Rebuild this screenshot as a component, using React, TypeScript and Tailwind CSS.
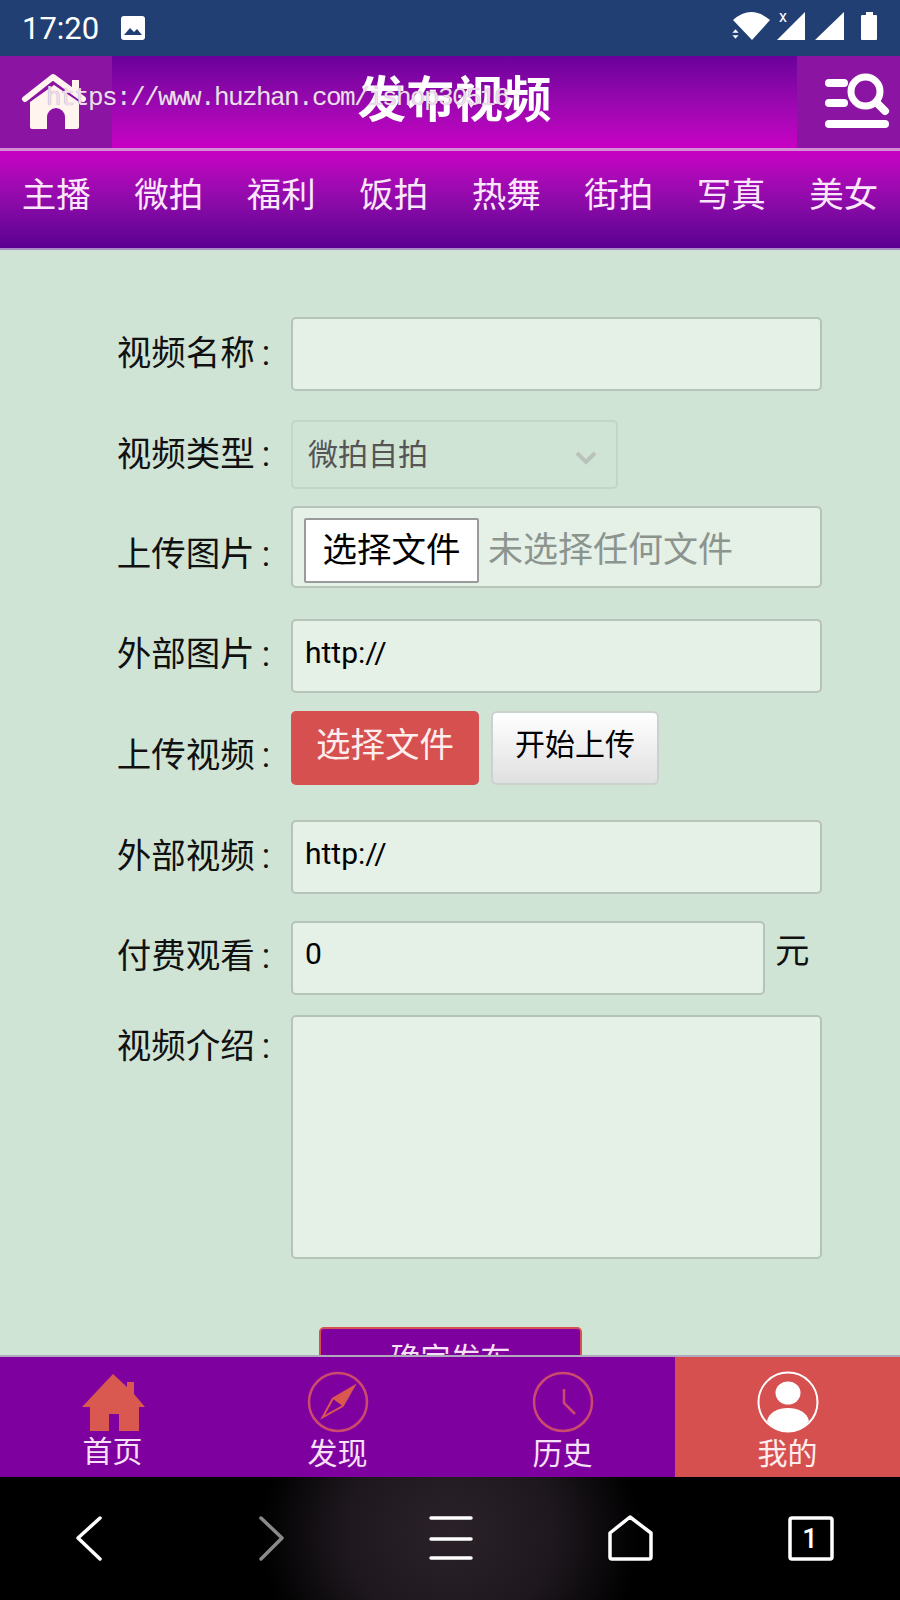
import React from 'react';

const inputBox = 'rounded-[5px] border-2 border-[#b5c3b9] bg-[#e5f0e7]';
const tabs = ['主播', '微拍', '福利', '饭拍', '热舞', '街拍', '写真', '美女'];

const Label: React.FC<{ text: string; className: string }> = ({ text, className }) => (
  <div className={`w-[291px] shrink-0 pr-[21px] text-right text-[34.5px] leading-[44px] text-[#111] whitespace-nowrap ${className}`}>
    {text}
    <span className="ml-[7px]">:</span>
  </div>
);

const StatusBar: React.FC = () => (
  <div className="h-[56px] shrink-0 bg-[#213f72] flex items-center text-white">
    <span className="ml-[22px] text-[31px] leading-none font-normal">17:20</span>
    <svg className="ml-[21px]" width="26" height="26" viewBox="0 0 26 26">
      <rect x="1" y="1" width="24" height="24" rx="3" fill="#fff" />
      <path d="M4 20l6-7 4 4 3-3 5 6z" fill="#213f72" />
    </svg>
    <svg className="ml-auto" width="168" height="56" viewBox="0 0 168 56" fill="#fff">
      <path d="M1 20Q19 4 38 20L20 40z" />
      <path d="M3.5 29l-3.5 4h7zM3.5 39l-3.5-4h7z" stroke="#213f72" strokeWidth="0.5" />
      <text x="47" y="22" fontSize="16" fill="#fff">x</text>
      <path d="M45 40L73 12v28z" />
      <path d="M83 40L112 12v28z" />
      <rect x="129" y="15" width="16" height="25" rx="1" />
      <rect x="134" y="12" width="7" height="4" />
    </svg>
  </div>
);

const Header: React.FC = () => (
  <div className="relative h-[92px] shrink-0 flex bg-gradient-to-b from-[#6b009a] to-[#c800c4]">
    <div className="w-[112px] bg-[#8b14a3] flex items-center justify-center">
      <svg width="112" height="92" viewBox="0 0 112 92" fill="#fff5ee">
        <path d="M25 43L53 21l30 22" fill="none" stroke="#fff5ee" strokeWidth="6" strokeLinecap="round" strokeLinejoin="round" />
        <path d="M30 46L54 29l25 17v25a2 2 0 0 1-2 2H65V61a9 9 0 0 0-18 0v12H32a2 2 0 0 1-2-2z" />
        <rect x="72" y="24" width="7" height="14" />
      </svg>
    </div>
    <div className="flex-1 text-center text-[48.5px] leading-[90px] font-bold text-white">发布视频</div>
    <div className="w-[103px] bg-[#8b14a3]">
      <svg width="103" height="92" viewBox="0 0 103 92" fill="none" stroke="#fff" strokeLinecap="round">
        <path d="M32 27h15M32 47h15" strokeWidth="8" />
        <circle cx="68.5" cy="35.5" r="14.5" strokeWidth="7" />
        <path d="M80 47l8 8" strokeWidth="8" />
        <path d="M32 68h56" strokeWidth="8" />
      </svg>
    </div>
    <div className="absolute left-[46px] top-[27px] text-[26px] leading-[30px] tracking-[-1.6px] text-[#f0dcf0] [text-shadow:0_0_1px_rgba(90,90,90,0.6)] font-['Liberation_Mono',monospace] whitespace-nowrap">
      https://www.huzhan.com/ishop30516
    </div>
  </div>
);

const Categories: React.FC = () => (
  <div className="h-[102px] shrink-0 border-t-[3px] border-[#d58ed6] border-b-2 border-b-[#a98bc4] bg-gradient-to-b from-[#c800c4] to-[#5a0090] grid grid-cols-8">
    {tabs.map(t => (
      <div key={t} className="text-center text-[34.5px] leading-[88px] text-[#fbe6fb]">{t}</div>
    ))}
  </div>
);

const Form: React.FC = () => (
  <div className="flex-1 overflow-hidden bg-[#d0e4d5] pt-[67px] pr-[78px]">
    <div className="flex">
      <Label text="视频名称" className="mt-[14px]" />
      <div className={`flex-1 h-[74px] ${inputBox}`} />
    </div>
    <div className="flex mt-[29px]">
      <Label text="视频类型" className="mt-[12px]" />
      <div className="w-[327px] h-[69px] rounded-[5px] border-2 border-[#c4d4c8] flex items-center pl-[15px] text-[30px] text-[#555]">
        微拍自拍
        <svg className="ml-auto mr-[19px] mt-[6px]" width="22" height="14" viewBox="0 0 22 14" fill="none" stroke="#b9c2bc" strokeWidth="4">
          <path d="M2 2l9 9 9-9" />
        </svg>
      </div>
    </div>
    <div className="flex mt-[17px]">
      <Label text="上传图片" className="mt-[26px]" />
      <div className={`flex-1 h-[82px] flex items-start pt-[10px] pl-[11px] ${inputBox}`}>
        <div className="w-[175px] h-[65px] bg-white border-2 border-[#9a9a9a] rounded-[2px] text-center text-[34.5px] leading-[60px] text-black">选择文件</div>
        <span className="ml-[9px] text-[35px] leading-[66px] text-[#8c948e] whitespace-nowrap">未选择任何文件</span>
      </div>
    </div>
    <div className="flex mt-[31px]">
      <Label text="外部图片" className="mt-[13px]" />
      <div className={`flex-1 h-[74px] pl-[12px] text-[30px] leading-[64px] text-black ${inputBox}`}>http://</div>
    </div>
    <div className="flex mt-[18px]">
      <Label text="上传视频" className="mt-[22px]" />
      <div className="w-[188px] h-[74px] rounded-[5px] bg-[#d65050] text-center text-[34.5px] leading-[68px] text-[#fdeeee]">选择文件</div>
      <div className="ml-[12px] w-[168px] h-[74px] rounded-[6px] border-2 border-[#c9d2cc] bg-gradient-to-b from-white to-[#e0e0e0] text-center text-[30px] leading-[64px] text-black">开始上传</div>
    </div>
    <div className="flex mt-[35px]">
      <Label text="外部视频" className="mt-[14px]" />
      <div className={`flex-1 h-[74px] pl-[12px] text-[30px] leading-[64px] text-black ${inputBox}`}>http://</div>
    </div>
    <div className="flex mt-[27px]">
      <Label text="付费观看" className="mt-[13px]" />
      <div className={`w-[474px] h-[74px] pl-[12px] text-[30px] leading-[62px] text-black ${inputBox}`}>0</div>
      <span className="ml-[10px] mt-[8px] text-[34.5px] leading-[44px] text-[#111]">元</span>
    </div>
    <div className="flex mt-[20px]">
      <Label text="视频介绍" className="mt-[9px]" />
      <div className={`flex-1 h-[244px] ${inputBox}`} />
    </div>
    <div className="mt-[68px] ml-[319px] w-[263px] h-[70px] rounded-[5px] border-2 border-[#d65050] bg-[#7e009f] text-center text-[30px] leading-[60px] text-[#f8e0f8]">
      确定发布
    </div>
  </div>
);

const BottomNav: React.FC = () => (
  <div className="h-[122px] shrink-0 border-t-2 border-[#b0a8bc] grid grid-cols-4 bg-[#7e009f] text-center text-[30px] leading-[34px] text-[#f8e0f8]">
    <div className="flex flex-col items-center">
      <svg className="mt-[16px]" width="66" height="60" viewBox="0 0 66 60" fill="#d9584f">
        <path d="M33 1L47 14V9h7v12l11 13h-6v24H39V41H29v17H10V34H2z" />
      </svg>
      <span className="mt-[2px]">首页</span>
    </div>
    <div className="flex flex-col items-center">
      <svg className="mt-[14px]" width="62" height="62" viewBox="0 0 62 62" fill="none" stroke="#cc4a6c" strokeWidth="2.5">
        <circle cx="31" cy="31" r="29" />
        <path d="M47 15.3L25.7 27.7 35.7 35z" fill="#d9584f" stroke="none" />
        <path d="M47 15.3L35.7 35 15.7 46.3 25.7 27.7z" stroke="#d9584f" strokeWidth="2" />
      </svg>
      <span className="mt-[4px]">发现</span>
    </div>
    <div className="flex flex-col items-center">
      <svg className="mt-[14px]" width="62" height="62" viewBox="0 0 62 62" fill="none" stroke="#cc4a6c" strokeWidth="2.5">
        <circle cx="31" cy="31" r="29" />
        <path d="M32 18v14l11 11" />
      </svg>
      <span className="mt-[4px]">历史</span>
    </div>
    <div className="flex flex-col items-center bg-[#d65050] text-[#fdeeee]">
      <svg className="mt-[14px]" width="62" height="62" viewBox="0 0 62 62" fill="#fff">
        <circle cx="31" cy="31" r="29.5" fill="none" stroke="#fff" strokeWidth="2" />
        <ellipse cx="31" cy="22" rx="12.5" ry="11.5" />
        <path d="M10 50c2-9 11-13 21-13s19 4 21 13c-5 7-13 11-21 11s-16-4-21-11z" />
      </svg>
      <span className="mt-[4px]">我的</span>
    </div>
  </div>
);

const SystemBar: React.FC = () => (
  <div className="h-[123px] shrink-0 bg-[radial-gradient(ellipse_190px_170px_at_50%_45%,#2a2228_0%,#1e181e_55%,#000_100%)] flex items-center justify-around">
    <svg className="w-full h-full" viewBox="0 0 900 123" fill="none" stroke="#fff" strokeWidth="3.5" strokeLinecap="round" strokeLinejoin="round">
      <path d="M100 41L78 61l22 21" />
      <path d="M261 41l21 20-21 21" stroke="#8a8a8a" />
      <path d="M431 41h40M431 62h40M431 81h40" />
      <path d="M610 80V56l20-16 21 16v24a2 2 0 0 1-2 2h-37a2 2 0 0 1-2-2z" />
      <rect x="790" y="41" width="42" height="41" rx="2" />
      <text x="810" y="71" fontSize="27" fontWeight="500" fill="#fff" stroke="none" textAnchor="middle">1</text>
    </svg>
  </div>
);

export default function App() {
  return (
    <div className="w-[900px] h-[1600px] overflow-hidden flex flex-col font-['Roboto','Noto_Sans_CJK_SC',sans-serif]">
      <StatusBar />
      <Header />
      <Categories />
      <Form />
      <BottomNav />
      <SystemBar />
    </div>
  );
}
